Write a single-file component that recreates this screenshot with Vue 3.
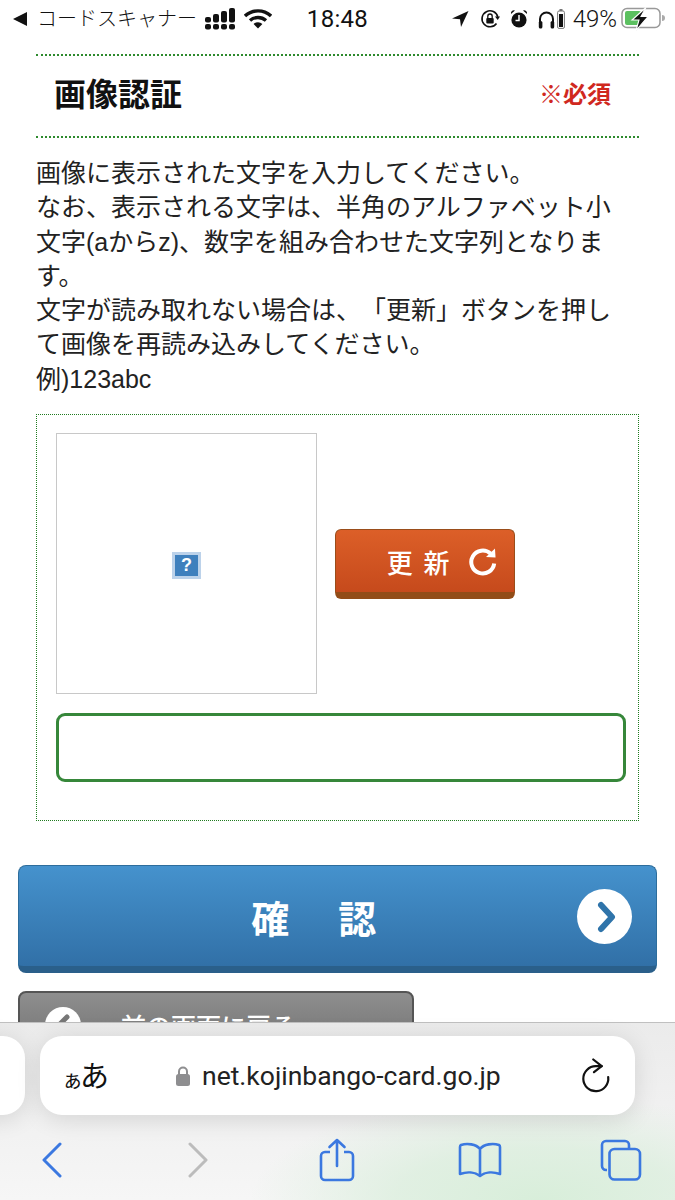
<template>
  <div class="phone">
    <header class="status">
      <div class="status-left">
        <span class="back-tri"></span>
        <span class="app-name">コードスキャナー</span>
        <svg class="signal" width="31" height="22" viewBox="0 0 31 22">
          <rect x="0" y="9" width="6" height="5.5" rx="2" />
          <rect x="0" y="16" width="6" height="5.5" rx="2" />
          <rect x="8" y="6" width="6" height="8.5" rx="2" />
          <rect x="8" y="16" width="6" height="5.5" rx="2" />
          <rect x="16" y="3" width="6" height="11.5" rx="2" />
          <rect x="16" y="16" width="6" height="5.5" rx="2" />
          <rect x="24" y="0" width="6" height="14.5" rx="2" />
          <rect x="24" y="16" width="6" height="5.5" rx="2" />
        </svg>
        <svg class="wifi" width="28" height="20" viewBox="0 0 28 20">
          <path d="M1 7 A19 19 0 0 1 27 7" />
          <path d="M6 11.5 A12 12 0 0 1 22 11.5" />
          <path d="M14 19.5 L9.6 15 A6.5 6.5 0 0 1 18.4 15 Z" class="wifi-dot" />
        </svg>
      </div>
      <div class="time">18:48</div>
      <div class="status-right">
        <svg width="17" height="16" viewBox="0 0 17 16"><path d="M16.5 0 L0 7.5 L8 8.3 L9 16 Z" fill="#111" /></svg>
        <svg class="rot" width="20" height="20" viewBox="0 0 20 20">
          <path d="M16.5 14.5 A8 8 0 1 1 17.8 8" fill="none" stroke="#111" stroke-width="1.6" />
          <path d="M15 7.5 L20 7.5 L17.7 11 Z" fill="#111" />
          <rect x="6.3" y="9" width="7.4" height="5.6" rx="1" fill="#111" />
          <path d="M7.8 9 V7.2 A2.2 2.2 0 0 1 12.2 7.2 V9" fill="none" stroke="#111" stroke-width="1.3" />
        </svg>
        <svg width="18" height="20" viewBox="0 0 18 20">
          <circle cx="9" cy="11" r="7.6" fill="#111" />
          <path d="M1 5 A3 3 0 0 1 5 1.5 Z M17 5 A3 3 0 0 0 13 1.5 Z" fill="#111" />
          <path d="M9 6 V11.5 H5.5" fill="none" stroke="#fff" stroke-width="1.5" />
        </svg>
        <svg class="phones" width="17" height="19" viewBox="0 0 17 19">
          <path d="M2 16 V9 A6.5 6.5 0 0 1 15 9 V16" fill="none" stroke="#111" stroke-width="2" />
          <rect x="0.8" y="11" width="3.6" height="7.5" rx="1.6" fill="#111" />
          <rect x="12.6" y="11" width="3.6" height="7.5" rx="1.6" fill="#111" />
        </svg>
        <svg class="mini-bat" width="8" height="20" viewBox="0 0 8 20">
          <rect x="2.5" y="0" width="3" height="2" fill="#777" />
          <rect x="0.6" y="2" width="6.8" height="17.4" rx="1.4" fill="none" stroke="#777" stroke-width="1" />
          <rect x="2" y="5" width="4" height="13" fill="#111" />
        </svg>
        <span class="pct">49%</span>
        <svg class="battery" width="44" height="24" viewBox="0 0 44 24">
          <rect x="1" y="1.500" width="38" height="19" rx="5" fill="none" stroke="#999" stroke-width="1.5" />
          <rect x="4" y="4" width="16" height="14" rx="2" fill="#5cc060" />
          <path d="M41 8 a3 3 0 0 1 0 6 Z" fill="#aaa" />
          <path d="M25 0.500 L11 13 H18 L15 23.500 L27 9.500 H20 Z" fill="#111" stroke="#fff" stroke-width="1.1" />
        </svg>
      </div>
    </header>

    <main class="content">
      <section class="form-wrap">
        <div class="form-title">
          <h2>画像認証</h2>
          <span class="required">※必須</span>
        </div>
        <p class="desc">
          画像に表示された文字を入力してください。<br>
          なお、表示される文字は、半角のアルファベット小文字(aからz)、数字を組み合わせた文字列となります。<br>
          文字が読み取れない場合は、「更新」ボタンを押して画像を再読み込みしてください。<br>
          例)123abc
        </p>
        <div class="captcha">
          <div class="captcha-row">
            <div class="captcha-img">
              <span class="broken">?</span>
            </div>
            <button class="refresh">
              <span class="refresh-label">更 新</span>
              <svg width="30" height="30" viewBox="0 0 30 30">
                <path d="M22.500 7.500 A11.500 11.500 0 1 0 26.200 17.500" fill="none" stroke="#fff" stroke-width="4" />
                <path d="M18 11 L27.500 11.500 L27 2.500 Z" fill="#fff" />
              </svg>
            </button>
          </div>
          <input class="captcha-input" type="text">
        </div>
      </section>

      <button class="confirm">
        <span class="confirm-label">確　認</span>
        <span class="confirm-arrow">
          <svg width="24" height="32" viewBox="0 0 24 32">
            <path d="M8 4 L19 16 L8 28" fill="none" stroke="#2f74aa" stroke-width="6" stroke-linecap="round" stroke-linejoin="round" />
          </svg>
        </span>
      </button>

      <button class="prev">
        <span class="prev-arrow">
          <svg width="18" height="24" viewBox="0 0 18 24">
            <path d="M13 4 L5 12 L13 20" fill="none" stroke="#777" stroke-width="5" stroke-linecap="round" stroke-linejoin="round" />
          </svg>
        </span>
        <span>前の画面に戻る</span>
      </button>
    </main>

    <footer class="safari">
      <div class="tabs">
        <div class="pill-prev"></div>
        <div class="address">
          <span class="aa"><small>ぁ</small>あ</span>
          <div class="url">
            <svg width="14" height="20" viewBox="0 0 14 20">
              <rect x="0" y="8" width="14" height="12" rx="2.5" fill="#8e8e90" />
              <path d="M3 9 V5.5 A4 4 0 0 1 11 5.5 V9" fill="none" stroke="#8e8e90" stroke-width="2" />
            </svg>
            <span>net.kojinbango-card.go.jp</span>
          </div>
          <svg class="reload" width="30" height="36" viewBox="0 0 30 36">
            <path d="M20.700 8.200 H15 A12.500 12.500 0 1 0 27.200 19.200" fill="none" stroke="#111" stroke-width="2.200" stroke-linecap="round" />
            <path d="M12.300 1.500 L20.700 8.200 L13 14.200" fill="none" stroke="#111" stroke-width="2.200" stroke-linecap="round" stroke-linejoin="round" />
          </svg>
        </div>
      </div>
      <nav class="toolbar">
        <svg class="tb-back" width="22" height="36" viewBox="0 0 22 36"><path d="M19 2 L3 18 L19 34" fill="none" stroke="#3b78e0" stroke-width="3" stroke-linecap="round" stroke-linejoin="round" /></svg>
        <svg class="tb-next" width="22" height="36" viewBox="0 0 22 36"><path d="M3 2 L19 18 L3 34" fill="none" stroke="#bcbcbc" stroke-width="3" stroke-linecap="round" stroke-linejoin="round" /></svg>
        <svg class="tb-share" width="36" height="44" viewBox="0 0 36 44">
          <path d="M11 14 H6 A4 4 0 0 0 2 18 V38 A4 4 0 0 0 6 42 H30 A4 4 0 0 0 34 38 V18 A4 4 0 0 0 30 14 H25" fill="none" stroke="#3b78e0" stroke-width="2.6" />
          <path d="M18 28 V2 M10.5 9 L18 2 L25.5 9" fill="none" stroke="#3b78e0" stroke-width="2.6" stroke-linecap="round" stroke-linejoin="round" />
        </svg>
        <svg width="44" height="36" viewBox="0 0 44 36">
          <path d="M22 7 C18 2 9 1 3 3 Q2 3.5 2 5 V32 C9 29.5 17 30 22 34 C27 30 35 29.5 42 32 V5 Q42 3.500 41 3 C35 1 26 2 22 7 Z M22 7 V34" fill="none" stroke="#3b78e0" stroke-width="2.6" stroke-linejoin="round" />
        </svg>
        <svg class="tb-tabs" width="42" height="42" viewBox="0 0 42 42">
          <path d="M7 31 H6 A4 4 0 0 1 2 27 V6 A4 4 0 0 1 6 2 H25 A4 4 0 0 1 29 6 V9" fill="none" stroke="#3b78e0" stroke-width="2.6" />
          <rect x="9.500" y="10" width="30.500" height="30.500" rx="5" fill="none" stroke="#3b78e0" stroke-width="2.6" />
        </svg>
      </nav>
    </footer>
  </div>
</template>

<script setup>
</script>

<style>
html, body {
  margin: 0;
  background: #fff;
}
</style>

<style scoped>
.phone {
  position: relative;
  width: 675px;
  height: 1200px;
  overflow: hidden;
  background: #fff;
  color: #111;
  font-family: "Liberation Sans", "Noto Sans CJK JP", sans-serif;
}

.status {
  height: 38px;
  display: grid;
  grid-template-columns: 1fr auto 1fr;
  align-items: center;
  box-sizing: border-box;
  padding: 0 10px 0 13px;
  font-family: Roboto, "Noto Sans CJK JP", sans-serif;
}
.status-left {
  display: flex;
  align-items: center;
}
.back-tri {
  width: 0;
  height: 0;
  border-top: 7px solid transparent;
  border-bottom: 7px solid transparent;
  border-right: 14px solid #111;
}
.app-name {
  margin-left: 10px;
  font-size: 20px;
  font-weight: 300;
  white-space: nowrap;
  line-height: 24px;
}
.signal {
  margin-left: 8px;
  fill: #111;
}
.wifi {
  margin-left: 8px;
}
.wifi path {
  fill: none;
  stroke: #111;
  stroke-width: 3.4;
}
.wifi .wifi-dot {
  fill: #111;
  stroke: none;
}
.time {
  font-size: 24px;
  font-weight: 400;
  padding-right: 3px;
  letter-spacing: 0.3px;
}
.status-right {
  display: flex;
  align-items: center;
  justify-content: flex-end;
}
.rot { margin-left: 11px; }
.rot + svg { margin-left: 10px; }
.phones { margin-left: 10px; }
.mini-bat { margin-left: 2px; }
.pct {
  margin-left: 8px;
  font-size: 24px;
  font-weight: 300;
}
.battery { margin-left: 4px; }

.content {
  padding-top: 16px;
}
.form-wrap {
  margin: 0 36px;
}
.form-title {
  display: flex;
  align-items: center;
  justify-content: space-between;
  padding: 0 28px 8px 18px;
  height: 72px;
  border-top: 2px dotted #2d8a2d;
  border-bottom: 2px dotted #2d8a2d;
}
.form-title h2 {
  margin: 0;
  font-size: 32px;
  line-height: 40px;
  font-weight: 700;
  color: #111;
  font-family: "Noto Sans CJK JP", sans-serif;
}
.required {
  font-size: 24px;
  font-weight: 700;
  color: #d0281e;
  font-family: "Noto Sans CJK JP", sans-serif;
}
.desc {
  margin: 18px 27px 18px 0;
  font-size: 25px;
  line-height: 34.3px;
  color: #222;
  font-weight: 400;
  text-spacing-trim: space-all;
}

.captcha {
  box-sizing: border-box;
  height: 407px;
  padding: 18px 12px 0 19px;
  border: 1px dotted #1f7a1f;
}
.captcha-row {
  display: flex;
  align-items: center;
  gap: 18px;
}
.captcha-img {
  box-sizing: border-box;
  width: 261px;
  height: 261px;
  padding-top: 3px;
  border: 1px solid #c8c8c8;
  display: flex;
  align-items: center;
  justify-content: center;
}
.broken {
  box-sizing: border-box;
  width: 29px;
  height: 27px;
  border: 3px solid #bcd2ea;
  background: #3f80bd;
  color: #fff;
  font: 700 18px/21px "Liberation Sans", sans-serif;
  text-align: center;
}
.refresh {
  box-sizing: border-box;
  width: 180px;
  height: 70px;
  margin-top: 1px;
  padding: 0 16px 0 0;
  display: flex;
  align-items: center;
  justify-content: flex-end;
  gap: 16px;
  border: 1px solid #9a4d1a;
  border-bottom: 7px solid #924c18;
  border-radius: 6px;
  background: linear-gradient(#dc5f28, #c64a1c);
  color: #fff;
  font-family: "Noto Sans CJK JP", sans-serif;
}
.refresh-label {
  font-size: 26px;
  font-weight: 500;
  white-space: pre;
  letter-spacing: 2.5px;
}
.captcha-input {
  display: block;
  box-sizing: border-box;
  width: 570px;
  height: 69px;
  margin-top: 19px;
  border: 3px solid #36873a;
  border-radius: 9px;
  background: #fff;
  outline: none;
}

.confirm {
  box-sizing: border-box;
  position: relative;
  display: flex;
  align-items: center;
  justify-content: center;
  width: 639px;
  height: 108px;
  margin: 44px 0 0 18px;
  padding: 0 42px 0 0;
  border: 1px solid #2d6d9c;
  border-bottom: 7px solid #2a5f8a;
  border-radius: 8px;
  background: linear-gradient(#4592cd, #3170a7);
  color: #fff;
  font-family: "Noto Sans CJK JP", sans-serif;
}
.confirm-label {
  font-size: 38px;
  font-weight: 700;
  white-space: pre;
  letter-spacing: 5.5px;
}
.confirm-arrow {
  position: absolute;
  right: 24px;
  top: 23px;
  width: 55px;
  height: 55px;
  border-radius: 50%;
  background: #fff;
  display: flex;
  align-items: center;
  justify-content: center;
}

.prev {
  box-sizing: border-box;
  display: flex;
  align-items: center;
  gap: 40px;
  width: 396px;
  height: 68px;
  margin: 18px 0 0 18px;
  padding: 0 0 0 25px;
  border: 2px solid #555;
  border-radius: 8px;
  background: linear-gradient(#8e8e8e, #707070);
  color: #fff;
  font-family: "Noto Sans CJK JP", sans-serif;
  font-size: 25px;
  font-weight: 500;
}
.prev-arrow {
  width: 36px;
  height: 36px;
  border-radius: 50%;
  background: #fff;
  display: flex;
  align-items: center;
  justify-content: center;
}

.safari {
  position: absolute;
  left: 0;
  right: 0;
  top: 1022px;
  bottom: 0;
  border-top: 1px solid #c0c0c0;
  background:
    radial-gradient(ellipse 290px 105px at 80% 100%, #d8eeda 0%, rgba(218, 238, 220, 0.75) 50%, rgba(240, 240, 240, 0) 100%),
    linear-gradient(#ebebeb, #f6f6f6);
}
.tabs {
  display: flex;
  gap: 15px;
  margin: 13px 0 0 -60px;
}
.pill-prev,
.address {
  height: 79px;
  background: #fff;
  border-radius: 22px;
  box-shadow: 0 4px 24px rgba(0, 0, 0, 0.12);
}
.pill-prev {
  width: 85px;
  flex: none;
}
.address {
  width: 595px;
  flex: none;
  display: flex;
  align-items: center;
  padding: 0 24px 0 23px;
  box-sizing: border-box;
}
.aa {
  width: 114px;
  flex: none;
  margin-left: -1px;
  font-family: "Noto Sans CJK JP", sans-serif;
  font-size: 29px;
  line-height: 30px;
}
.aa small {
  font-size: 21px;
  letter-spacing: -3px;
}
.url {
  display: flex;
  align-items: center;
  gap: 12px;
  font-family: Roboto, sans-serif;
  font-size: 26.5px;
  color: #222;
}
.reload {
  margin-left: auto;
}
.toolbar {
  display: grid;
  grid-template-columns: repeat(5, 142px);
  justify-items: center;
  align-items: center;
  margin: 20px 0 0 -17.5px;
  height: 50px;
}
.tb-back {
  margin-right: 3px;
}
.tb-next {
  margin-left: 5px;
}
.tb-share {
  margin-right: 2px;
}
.tb-tabs {
  margin-right: 2px;
}
</style>
